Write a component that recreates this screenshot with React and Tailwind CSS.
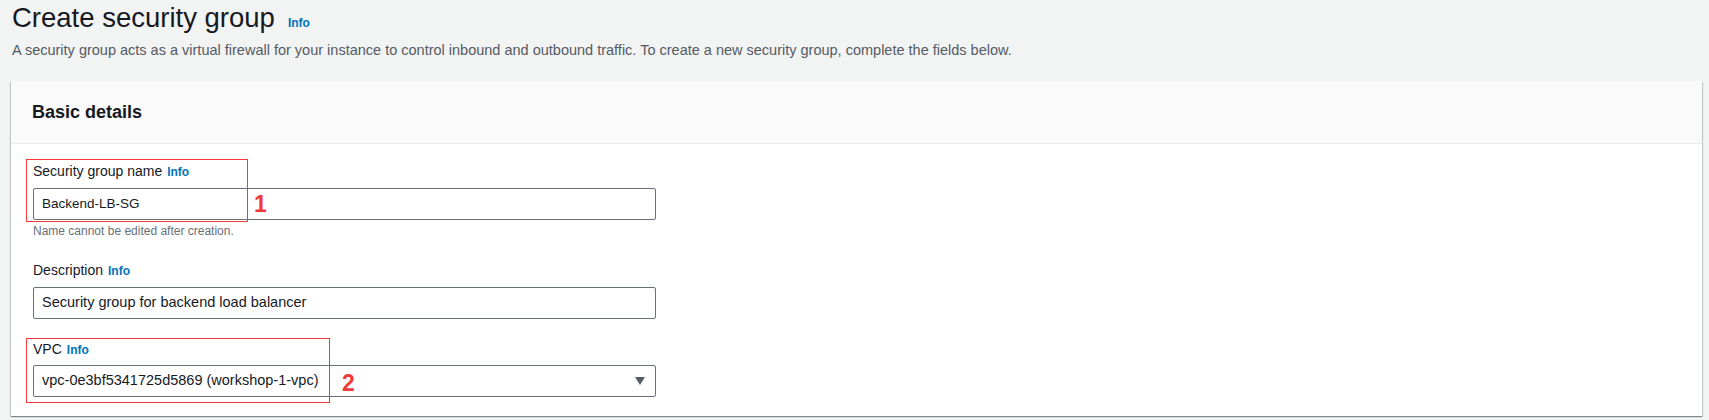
export default function App() {
  const info = (
    <span className="ml-[5px] text-[12px] font-bold text-[#0073bb]">Info</span>
  );
  return (
    <div className="min-h-[420px] bg-[#f2f3f3] font-['Liberation_Sans',Arial,sans-serif] text-[#16191f]">
      <div className="pl-[12px]">
        <div className="flex items-baseline h-[36px] leading-[36px]">
          <h1 className="text-[27.5px] font-normal">Create security group</h1>
          <span className="ml-[13px] text-[12px] font-bold text-[#0073bb]">Info</span>
        </div>
        <p className="mt-[4px] text-[14.5px] leading-[20px] text-[#545b64]">
          A security group acts as a virtual firewall for your instance to control inbound and outbound traffic. To create a new security group, complete the fields below.
        </p>
      </div>
      <div className="ml-[11px] mr-[7px] mt-[21px] bg-white shadow-[0_1px_1px_0_rgba(0,28,36,0.3),1px_1px_1px_0_rgba(0,28,36,0.15),-1px_1px_1px_0_rgba(0,28,36,0.15)]">
        <div className="bg-[#fafafa] border-b border-[#eaeded] px-[21px] py-[20px]">
          <h2 className="text-[18px] leading-[22px] font-bold">Basic details</h2>
        </div>
        <div className="px-[22px] pt-[17px] pb-[19px]">
          <div className="relative">
            <div className="absolute left-[-7px] top-[-2px] w-[222px] h-[63px] border border-[#f23a3a]" />
            <div className="absolute left-[221px] top-[30px] text-[23px] leading-[26px] font-bold text-[#f23a3a]">1</div>
            <label className="block text-[14px] leading-[20px] mb-[6px]">Security group name{info}</label>
            <div className="w-[623px] h-[32px] border border-[#687078] rounded-[2px] px-[8px] flex items-center text-[13.5px]">
              Backend-LB-SG
            </div>
            <p className="mt-[3px] text-[12px] leading-[16px] text-[#687078]">Name cannot be edited after creation.</p>
          </div>
          <div className="mt-[21px]">
            <label className="block text-[14px] leading-[20px] mb-[6px]">Description{info}</label>
            <div className="w-[623px] h-[32px] border border-[#687078] rounded-[2px] px-[8px] flex items-center text-[14.5px]">
              Security group for backend load balancer
            </div>
          </div>
          <div className="relative mt-[20px]">
            <div className="absolute left-[-7px] top-[-1px] w-[304px] h-[65px] border border-[#f23a3a]" />
            <div className="absolute left-[309px] top-[31px] text-[23px] leading-[26px] font-bold text-[#f23a3a]">2</div>
            <label className="block text-[14px] leading-[20px] mb-[5px]">VPC{info}</label>
            <div className="w-[623px] h-[32px] border border-[#687078] rounded-[2px] pl-[8px] pr-[10px] flex items-center justify-between text-[14.5px]">
              <span>vpc-0e3bf5341725d5869 (workshop-1-vpc)</span>
              <svg width="10" height="8" viewBox="0 0 10 8"><path d="M0 0 H10 L5 8 Z" fill="#545b64" /></svg>
            </div>
          </div>
        </div>
      </div>
    </div>
  );
}
